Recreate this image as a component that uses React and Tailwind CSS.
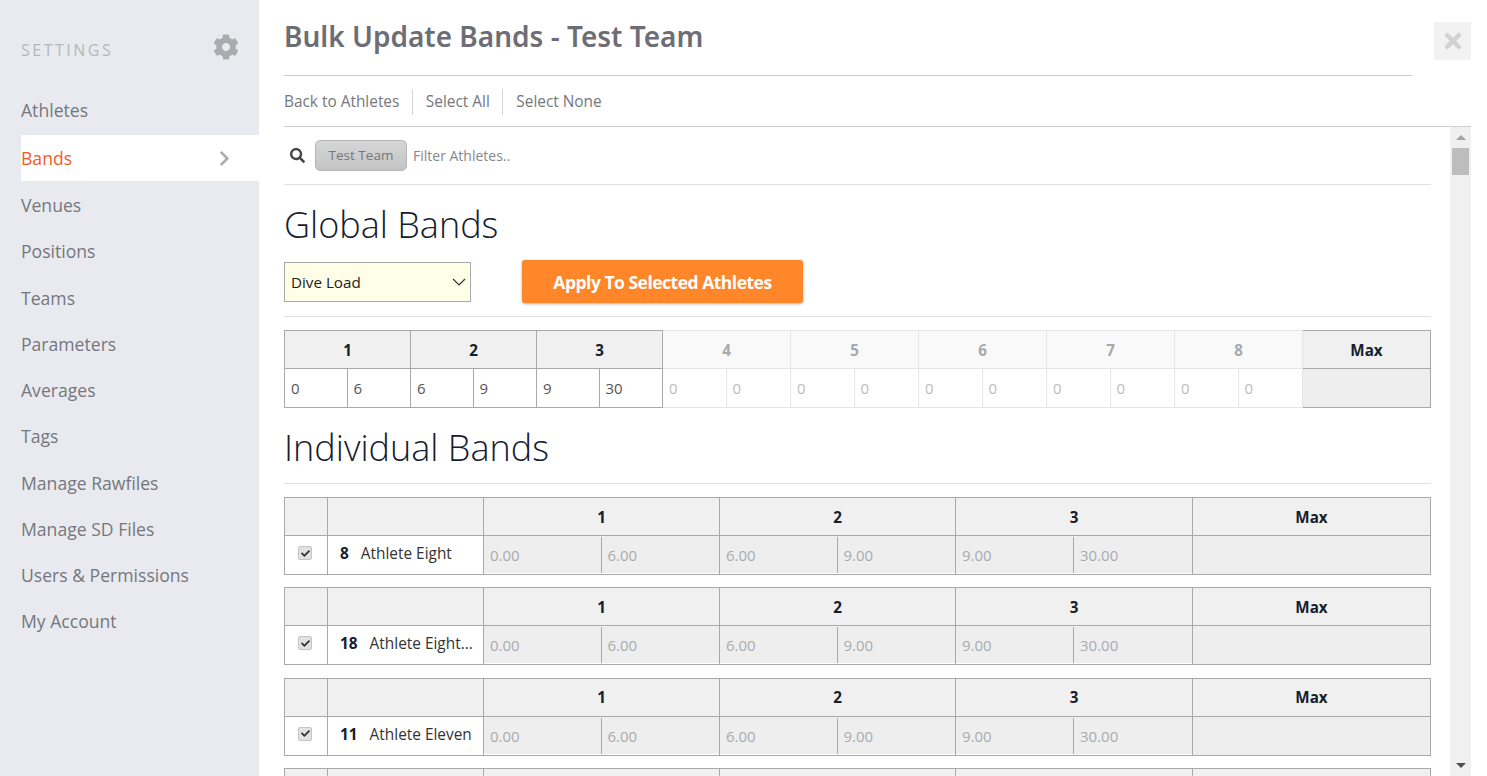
import { FaCog, FaChevronRight, FaSearch, FaTimes, FaCheck } from "react-icons/fa";

const navItems = [
  "Athletes",
  "Bands",
  "Venues",
  "Positions",
  "Teams",
  "Parameters",
  "Averages",
  "Tags",
  "Manage Rawfiles",
  "Manage SD Files",
  "Users & Permissions",
  "My Account",
];

const globalBands = [
  { label: "1", from: "0", to: "6", active: true },
  { label: "2", from: "6", to: "9", active: true },
  { label: "3", from: "9", to: "30", active: true },
  { label: "4", from: "0", to: "0" },
  { label: "5", from: "0", to: "0" },
  { label: "6", from: "0", to: "0" },
  { label: "7", from: "0", to: "0" },
  { label: "8", from: "0", to: "0" },
];

const athletes = [
  { number: "8", name: "Athlete Eight" },
  { number: "18", name: "Athlete Eight..." },
  { number: "11", name: "Athlete Eleven" },
];

const bandValues = [
  ["0.00", "6.00"],
  ["6.00", "9.00"],
  ["9.00", "30.00"],
];

function Sidebar() {
  return (
    <aside className="w-[259px] shrink-0 bg-[#e9eaef] pl-[21px]">
      <div className="flex h-[87px] items-start justify-between pr-[20px] pt-[34px]">
        <span className="mt-[4px] text-[16px] leading-[24px] tracking-[2.5px] text-[#b5b7bc]">SETTINGS</span>
        <FaCog className="text-[26px] text-[#a9abaf]" />
      </div>
      <nav>
        {navItems.map((item) => (
          <div
            key={item}
            className={
              item === "Bands"
                ? "mb-[1px] mt-[2px] flex h-[46px] items-center justify-between bg-white pr-[26px] text-[17.6px] text-[#f4592a]"
                : "flex h-[46.25px] items-center text-[17.6px] text-[#75777d]"
            }
          >
            {item}
            {item === "Bands" && <FaChevronRight className="text-[17px] text-[#a9abaf]" />}
          </div>
        ))}
      </nav>
    </aside>
  );
}

function GlobalTable() {
  return (
    <table className="w-full table-fixed border-collapse">
      <colgroup>
        <col className="w-[126px]" />
        <col className="w-[126px]" />
        <col className="w-[126px]" />
        <col className="w-[128px]" />
        <col className="w-[128px]" />
        <col className="w-[128px]" />
        <col className="w-[128px]" />
        <col className="w-[128px]" />
        <col />
      </colgroup>
      <thead>
        <tr className="h-[38px]">
          {globalBands.map((band) => (
            <th
              key={band.label}
              className={
                band.active
                  ? "border border-[#a9a9a9] bg-[#f0f0f0] pt-[1px] text-[15.2px] font-bold text-[#14202e]"
                  : "border border-[#e6e6e6] bg-[#f9f9f9] pt-[1px] text-[15.2px] font-bold text-[#a6a9ad]"
              }
            >
              {band.label}
            </th>
          ))}
          <th className="border border-[#a9a9a9] bg-[#f0f0f0] pt-[1px] text-[15.2px] font-bold text-[#14202e]">Max</th>
        </tr>
      </thead>
      <tbody>
        <tr className="h-[39px]">
          {globalBands.map((band) => (
            <td
              key={band.label}
              className={band.active ? "border border-[#a9a9a9] p-0" : "border border-[#e6e6e6] p-0"}
            >
              <div className="grid h-[38px] grid-cols-2">
                <span
                  className={
                    band.active
                      ? "flex items-center border-r border-[#a9a9a9] pl-[6px] text-[15px] text-[#555]"
                      : "flex items-center border-r border-[#e6e6e6] pl-[6px] text-[15px] text-[#bdbdbd]"
                  }
                >
                  {band.from}
                </span>
                <span
                  className={
                    band.active
                      ? "flex items-center pl-[6px] text-[15px] text-[#555]"
                      : "flex items-center pl-[6px] text-[15px] text-[#bdbdbd]"
                  }
                >
                  {band.to}
                </span>
              </div>
            </td>
          ))}
          <td className="border border-[#a9a9a9] bg-[#eeeeee] p-0" />
        </tr>
      </tbody>
    </table>
  );
}

// the last table only peeks in at the bottom of the scroll area, so it has no athlete
function AthleteTable({ athlete }) {
  return (
    <table className="w-full table-fixed border-collapse">
      <colgroup>
        <col className="w-[43px]" />
        <col className="w-[156px]" />
        <col className="w-[236px]" />
        <col className="w-[236px]" />
        <col className="w-[237px]" />
        <col />
      </colgroup>
      <thead>
        <tr className="h-[38px] bg-[#f0f0f0] text-[15.2px] font-bold text-[#14202e]">
          <th className="border border-[#a9a9a9]" />
          <th className="border border-[#a9a9a9]" />
          <th className="border border-[#a9a9a9] pt-[1px]">{athlete && "1"}</th>
          <th className="border border-[#a9a9a9] pt-[1px]">{athlete && "2"}</th>
          <th className="border border-[#a9a9a9] pt-[1px]">{athlete && "3"}</th>
          <th className="border border-[#a9a9a9] pt-[1px]">{athlete && "Max"}</th>
        </tr>
      </thead>
      {athlete && (
        <tbody>
          <tr className="h-[39px]">
            <td className="border border-[#a9a9a9] p-0 pr-[2px]">
              <span className="mx-auto mb-[4px] flex h-[14px] w-[14px] items-center justify-center rounded-[2px] border border-[#c4c4c4] bg-[#e2e2e2] text-[9px] text-[#333]">
                <FaCheck />
              </span>
            </td>
            <td className="truncate border border-[#a9a9a9] p-0 pb-[3px] pl-[12px] text-[15.4px] text-[#333]">
              <span className="font-bold text-[#14202e]">{athlete.number}</span>
              <span className="ml-[12px]">{athlete.name}</span>
            </td>
            {bandValues.map((pair) => (
              <td key={pair[0]} className="border border-[#a9a9a9] p-0">
                <div className="grid h-[38px] grid-cols-2 border-b border-white bg-[#eeeeee] pt-[1px] text-[15px] text-[#a9abaf]">
                  <span className="flex items-center border-r border-[#a9a9a9] pl-[6px]">{pair[0]}</span>
                  <span className="flex items-center pl-[6px]">{pair[1]}</span>
                </div>
              </td>
            ))}
            <td className="border border-[#a9a9a9] bg-[#eeeeee] p-0" />
          </tr>
        </tbody>
      )}
    </table>
  );
}

function Scrollbar() {
  return (
    <div className="flex w-[21px] shrink-0 flex-col items-center bg-[#f0f0f0]">
      <div className="mt-[8px] h-0 w-0 border-x-[5px] border-b-[5px] border-x-transparent border-b-[#a3a3a3]" />
      <div className="mt-[8px] h-[27px] w-[17px] bg-[#bdbdbd]" />
      <div className="mb-[8px] mt-auto h-0 w-0 border-x-[5px] border-t-[5px] border-x-transparent border-t-[#505050]" />
    </div>
  );
}

export default function App() {
  return (
    <div className="flex h-screen overflow-hidden bg-white font-['Open_Sans',sans-serif]">
      <Sidebar />

      <main className="flex min-w-0 flex-1 flex-col pl-[25px] pr-[16px]">
        <header className="flex shrink-0 items-start">
          <div className="mr-[22px] h-[76px] flex-1 border-b border-[#cfcfd2]">
            <h1 className="pt-[15px] font-['Noto_Sans',sans-serif] text-[28px] leading-[42px] font-semibold text-[#6d6e75]">
              Bulk Update Bands - Test Team
            </h1>
          </div>
          <button className="mt-[22px] flex h-[38px] w-[37px] items-center justify-center bg-[#f2f2f2] text-[24px] text-[#d2d2d2]">
            <FaTimes />
          </button>
        </header>

        <div className="flex h-[51px] shrink-0 items-center border-b border-[#cfcfd6] pt-[1px] text-[15.4px] text-[#75777d]">
          <span className="flex h-[26px] items-center border-r border-[#d4d4d4] pr-[13px]">Back to Athletes</span>
          <span className="flex h-[26px] items-center border-r border-[#d4d4d4] px-[12.5px]">Select All</span>
          <span className="pl-[13px]">Select None</span>
        </div>

        <div className="flex min-h-0 flex-1">
          <div className="min-w-0 flex-1 overflow-hidden pr-[19px]">
            <div className="flex h-[58px] items-center border-b border-[#e2e2e2] pl-[6px]">
              <FaSearch className="text-[15px] text-[#444]" />
              <span className="ml-[10px] flex h-[31px] w-[92px] items-center justify-center rounded-[5px] border border-[#b5b5b5] bg-gradient-to-b from-[#d6d6d6] to-[#c4c4c4] text-[13.5px] text-[#777]">
                Test Team
              </span>
              <span className="ml-[6px] text-[14px] text-[#888]">Filter Athletes..</span>
            </div>

            <h2 className="pt-[14px] text-[36px] leading-[52px] font-light text-[#14202e]">Global Bands</h2>

            <div className="mt-[9px] flex items-center border-b border-[#e2e2e2] pb-[13px]">
              <div className="flex h-[40px] w-[187px] items-center justify-between border border-[#a9a9a9] bg-[#ffffe8] pl-[6px] pr-[4px] pt-[1px] text-[15.2px] text-[#222]">
                Dive Load
                <svg viewBox="0 0 14 8" className="h-[8px] w-[14px]" fill="none" stroke="#333" strokeWidth="1.2">
                  <path d="M1 1l6 6 6-6" />
                </svg>
              </div>
              <button className="ml-[51px] h-[43px] w-[281px] rounded-[3px] bg-[#ff8629] pt-[2px] text-[17.5px] font-bold tracking-[-0.5px] text-white shadow-[0_1px_3px_rgba(0,0,0,0.3)]">
                Apply To Selected Athletes
              </button>
            </div>

            <div className="mt-[13px]">
              <GlobalTable />
            </div>

            <h2 className="pt-[14px] text-[36px] leading-[52px] font-light text-[#14202e]">Individual Bands</h2>
            <div className="mt-[9px] border-b border-[#e2e2e2]" />

            <div className="mt-[13px] flex flex-col gap-[12.4px]">
              {athletes.map((athlete) => (
                <AthleteTable key={athlete.number} athlete={athlete} />
              ))}
              <AthleteTable />
            </div>
          </div>
          <Scrollbar />
        </div>
      </main>
    </div>
  );
}
